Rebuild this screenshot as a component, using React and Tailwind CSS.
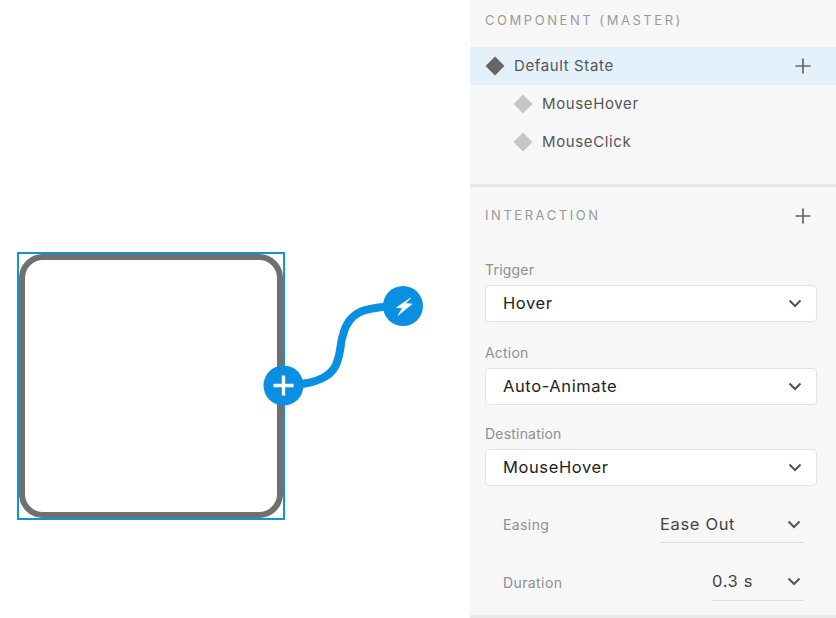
import React from "react";

const Plus = ({ className = "" }) => (
  <svg width="16" height="16" viewBox="0 0 16 16" className={className}>
    <path d="M8 0.5V15.5M0.5 8H15.5" stroke="#666" strokeWidth="1.7" fill="none" />
  </svg>
);

const Chevron = () => (
  <svg width="14" height="9" viewBox="0 0 14 9" className="block">
    <path d="M1.5 1.5L7 7L12.5 1.5" stroke="#555" strokeWidth="2" fill="none" />
  </svg>
);

const Diamond = ({ color }) => (
  <svg width="20" height="20" viewBox="0 0 20 20" className="block shrink-0">
    <path d="M10 0.5L19.5 10L10 19.5L0.5 10Z" fill={color} />
  </svg>
);

const Select = ({ label, value, labelClass }) => (
  <div className={labelClass}>
    <div className="text-[14px] leading-[17px] text-[#8f8f8f] tracking-[0.2px]">{label}</div>
    <div className="mt-[7px] h-[37px] bg-white border border-[#e2e2e2] rounded-[4px] flex items-center justify-between pl-[17px] pr-[14px] text-[16.5px] text-[#222] tracking-[0.6px]">
      <span>{value}</span>
      <Chevron />
    </div>
  </div>
);

const SubRow = ({ label, value, width, className, boxClass }) => (
  <div className={`flex items-center justify-between pl-[33px] pr-[32px] ${className}`}>
    <span className="text-[14px] text-[#8f8f8f] tracking-[0.4px]">{label}</span>
    <div style={{ width }} className={`h-[38px] border-b border-[#dcdcdc] flex items-center justify-between pr-[3px] text-[16.5px] text-[#444] tracking-[0.65px] ${boxClass}`}>
      <span>{value}</span>
      <Chevron />
    </div>
  </div>
);

export default function App() {
  return (
    <div className="w-[836px] h-[618px] bg-white flex overflow-hidden font-['Inter','Liberation_Sans',sans-serif]">
      <div className="relative w-[470px] h-full">
        <div className="absolute left-[17px] top-[252px] w-[268px] h-[268px] border-2 border-[#0f95d6]">
          <div className="w-full h-full border-[6px] border-[#707070] rounded-[24px] bg-white" />
        </div>
        <svg width="190" height="140" viewBox="0 0 190 140" className="absolute left-[250px] top-[270px]">
          <path d="M34 115C55 115 78 112 86 95C92 80 90 72 93 65C96 52 102 46 110 42C120 38 135 36 154 36" stroke="#0a90e2" strokeWidth="8" fill="none" />
          <circle cx="33.5" cy="115.5" r="20" fill="#0a90e2" />
          <path d="M33.5 105.5V125.5M23.5 115.5H43.5" stroke="#fff" strokeWidth="3.4" fill="none" />
          <circle cx="153" cy="36" r="20" fill="#0a90e2" />
          <path d="M160.5 28L146.5 37.5L152.5 38L148 45.5L162 34L155.5 33.5Z" fill="#fff" stroke="#fff" strokeWidth="0.6" />
        </svg>
      </div>

      <div className="w-[366px] h-full bg-[#f7f7f7] flex flex-col">
        <div className="h-[187px] border-b-[3px] border-[#e8e8e8] shrink-0">
          <div className="h-[47px] pl-[15px] pt-[11px] text-[13px] leading-[18px] tracking-[2.55px] text-[#9a9a9a]">COMPONENT (MASTER)</div>
          <div className="h-[38px] bg-[#e4f1fa] flex items-center pl-[15px] pr-[25px] text-[15px] text-[#555] tracking-[0.62px]">
            <Diamond color="#666666" />
            <span className="ml-[9px] flex-1">Default State</span>
            <Plus />
          </div>
          <div className="h-[38px] flex items-center pl-[43px] text-[15px] text-[#555] tracking-[0.62px]">
            <Diamond color="#c6c6c6" />
            <span className="ml-[9px]">MouseHover</span>
          </div>
          <div className="h-[38px] flex items-center pl-[43px] text-[15px] text-[#555] tracking-[0.62px]">
            <Diamond color="#c6c6c6" />
            <span className="ml-[9px]">MouseClick</span>
          </div>
        </div>

        <div className="flex-1 flex flex-col">
          <div className="h-[56px] flex items-center justify-between pl-[15px] pr-[25px] pt-[1px] shrink-0">
            <span className="text-[13px] tracking-[2.55px] text-[#9a9a9a]">INTERACTION</span>
            <Plus />
          </div>
          <div className="px-[15px] pr-[19px] pt-[18px]">
            <Select label="Trigger" value="Hover" />
            <Select label="Action" value="Auto-Animate" labelClass="mt-[22px]" />
            <Select label="Destination" value="MouseHover" labelClass="mt-[20px]" />
          </div>
          <SubRow label="Easing" value="Ease Out" width={144} className="mt-[19px]" boxClass="pt-[2px]" />
          <SubRow label="Duration" value="0.3 s" width={92} className="mt-[20px]" boxClass="" />
        </div>
        <div className="h-[3px] bg-[#e8e8e8] shrink-0" />
      </div>
    </div>
  );
}
